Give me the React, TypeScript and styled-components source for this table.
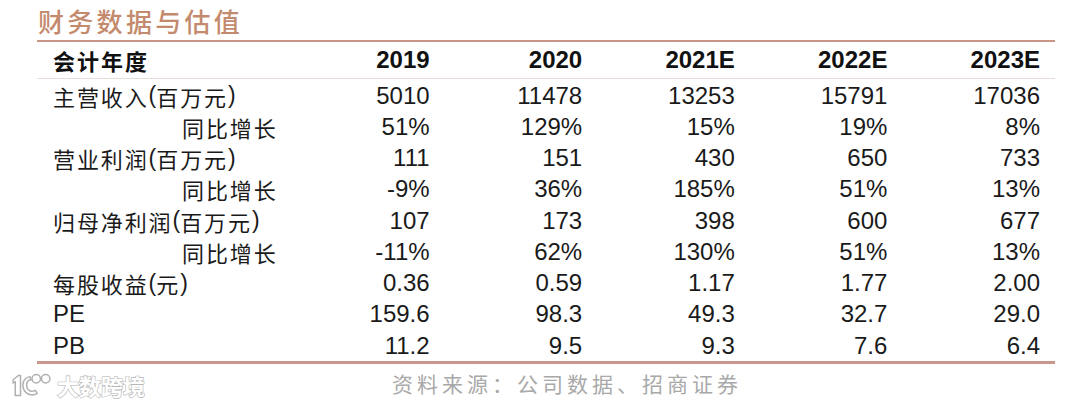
import React from "react";
import styled, { createGlobalStyle } from "styled-components";

const GlobalStyle = createGlobalStyle`
	html, body {
		margin: 0;
		padding: 0;
		background: #ffffff;
	}
	body {
		width: 1080px;
		height: 408px;
		overflow: hidden;
		font-family: "Liberation Sans", "Noto Sans CJK SC", sans-serif;
	}
`;

const Page = styled.div`
	position: relative;
	width: 1080px;
	height: 408px;
	display: flex;
	flex-direction: column;
	padding-left: 37px;
	box-sizing: border-box;
`;

const Title = styled.div`
	height: 40px;
	display: flex;
	align-items: center;
	font-family: "Noto Sans CJK SC", sans-serif;
	font-size: 26px;
	font-weight: 500;
	letter-spacing: 3.3px;
	color: #c48a6d;
	padding-left: 1px;
	padding-top: 1px;
	box-sizing: border-box;
`;

const Table = styled.div`
	width: 1018px;
	display: grid;
	grid-template-columns: 255px repeat(5, 1fr);
	border-top: 2px solid #c99584;
	border-bottom: 3px solid #c8968a;
`;

const HeadRow = styled.div`
	display: contents;
`;

const HeadCell = styled.div<{ $label?: boolean }>`
	height: 36px;
	display: flex;
	align-items: center;
	justify-content: ${(p) => (p.$label ? "flex-start" : "flex-end")};
	padding: ${(p) => (p.$label ? "0 0 0 16px" : "0 15px 0 0")};
	font-family: ${(p) =>
		p.$label ? `"Noto Sans CJK SC", sans-serif` : `"Liberation Sans", sans-serif`};
	font-size: ${(p) => (p.$label ? "22px" : "24px")};
	letter-spacing: ${(p) => (p.$label ? "2px" : "0")};
	font-weight: 700;
	color: #111;
	border-bottom: 1px solid #e6dcd9;
	margin-bottom: 1px;
`;

const Label = styled.div<{ $indent?: boolean }>`
	height: 31.25px;
	display: flex;
	align-items: center;
	padding-left: ${(p) => (p.$indent ? "145px" : "16px")};
	font-family: "Noto Sans CJK SC", sans-serif;
	font-size: 22px;
	letter-spacing: 1.9px;
	color: #1a1a1a;
	white-space: nowrap;
`;

const Paren = styled.span`
	font-family: "Liberation Sans", sans-serif;
	letter-spacing: 0;
	font-size: 23px;
`;

const Latin = styled.span`
	font-family: "Liberation Sans", sans-serif;
	font-size: 24px;
	letter-spacing: 0;
`;

const Num = styled.div`
	height: 31.25px;
	display: flex;
	align-items: center;
	justify-content: flex-end;
	padding-right: 15px;
	font-family: "Liberation Sans", sans-serif;
	font-size: 24px;
	color: #1a1a1a;
`;

const Footer = styled.div`
	height: 40px;
	display: flex;
	align-items: center;
	padding-left: 355px;
	box-sizing: border-box;
`;

const Source = styled.div`
	font-family: "Noto Sans CJK SC", sans-serif;
	font-size: 21px;
	letter-spacing: 4px;
	color: #a9a9a9;
	padding-bottom: 3px;
`;

const Watermark = styled.div`
	position: absolute;
	left: 10px;
	bottom: 7px;
	display: flex;
	align-items: center;
	gap: 5px;
`;

const WatermarkText = styled.span`
	font-family: "Noto Sans CJK SC", sans-serif;
	font-size: 22px;
	font-weight: 700;
	color: #ffffff;
	-webkit-text-stroke: 1.2px #b4b4b4;
	paint-order: stroke fill;
	text-shadow: 0 0 1px #c8c8c8;
`;

type Row = { label: string; indent?: boolean; values: string[] };

const rows: Row[] = [
	{ label: "主营收入(百万元)", values: ["5010", "11478", "13253", "15791", "17036"] },
	{ label: "同比增长", indent: true, values: ["51%", "129%", "15%", "19%", "8%"] },
	{ label: "营业利润(百万元)", values: ["111", "151", "430", "650", "733"] },
	{ label: "同比增长", indent: true, values: ["-9%", "36%", "185%", "51%", "13%"] },
	{ label: "归母净利润(百万元)", values: ["107", "173", "398", "600", "677"] },
	{ label: "同比增长", indent: true, values: ["-11%", "62%", "130%", "51%", "13%"] },
	{ label: "每股收益(元)", values: ["0.36", "0.59", "1.17", "1.77", "2.00"] },
	{ label: "PE", values: ["159.6", "98.3", "49.3", "32.7", "29.0"] },
	{ label: "PB", values: ["11.2", "9.5", "9.3", "7.6", "6.4"] },
];

const years = ["2019", "2020", "2021E", "2022E", "2023E"];

function renderLabel(text: string) {
	if (/^[A-Z]+$/.test(text)) return <Latin>{text}</Latin>;
	return text.split(/([()])/).map((part, i) =>
		part === "(" || part === ")" ? <Paren key={i}>{part}</Paren> : <span key={i}>{part}</span>
	);
}

function Logo() {
	return (
		<svg width="42" height="30" viewBox="0 0 40 28">
			<g fill="#ffffff" stroke="#b0b0b0" strokeWidth="1.4">
				<path d="M3 9 L8 5 L10 5 L10 24 L5 24 L5 11 L3 12 Z" />
				<path d="M19 6 C13 7 11 13 13 18 C15 23 21 25 26 22 L24 19 C21 21 17 20 16 16 C15 12 17 9 20 9 Z" />
				<circle cx="25" cy="8" r="4" />
				<circle cx="34" cy="8" r="4" />
			</g>
		</svg>
	);
}

export default function App() {
	return (
		<>
			<GlobalStyle />
			<Page>
				<Title>财务数据与估值</Title>
				<Table>
					<HeadRow>
						<HeadCell $label>会计年度</HeadCell>
						{years.map((y) => (
							<HeadCell key={y}>{y}</HeadCell>
						))}
					</HeadRow>
					{rows.map((r, i) => (
						<React.Fragment key={i}>
							<Label $indent={r.indent}>{renderLabel(r.label)}</Label>
							{r.values.map((v, j) => (
								<Num key={j}>{v}</Num>
							))}
						</React.Fragment>
					))}
				</Table>
				<Footer>
					<Source>资料来源：公司数据、招商证券</Source>
				</Footer>
				<Watermark>
					<Logo />
					<WatermarkText>大数跨境</WatermarkText>
				</Watermark>
			</Page>
		</>
	);
}
